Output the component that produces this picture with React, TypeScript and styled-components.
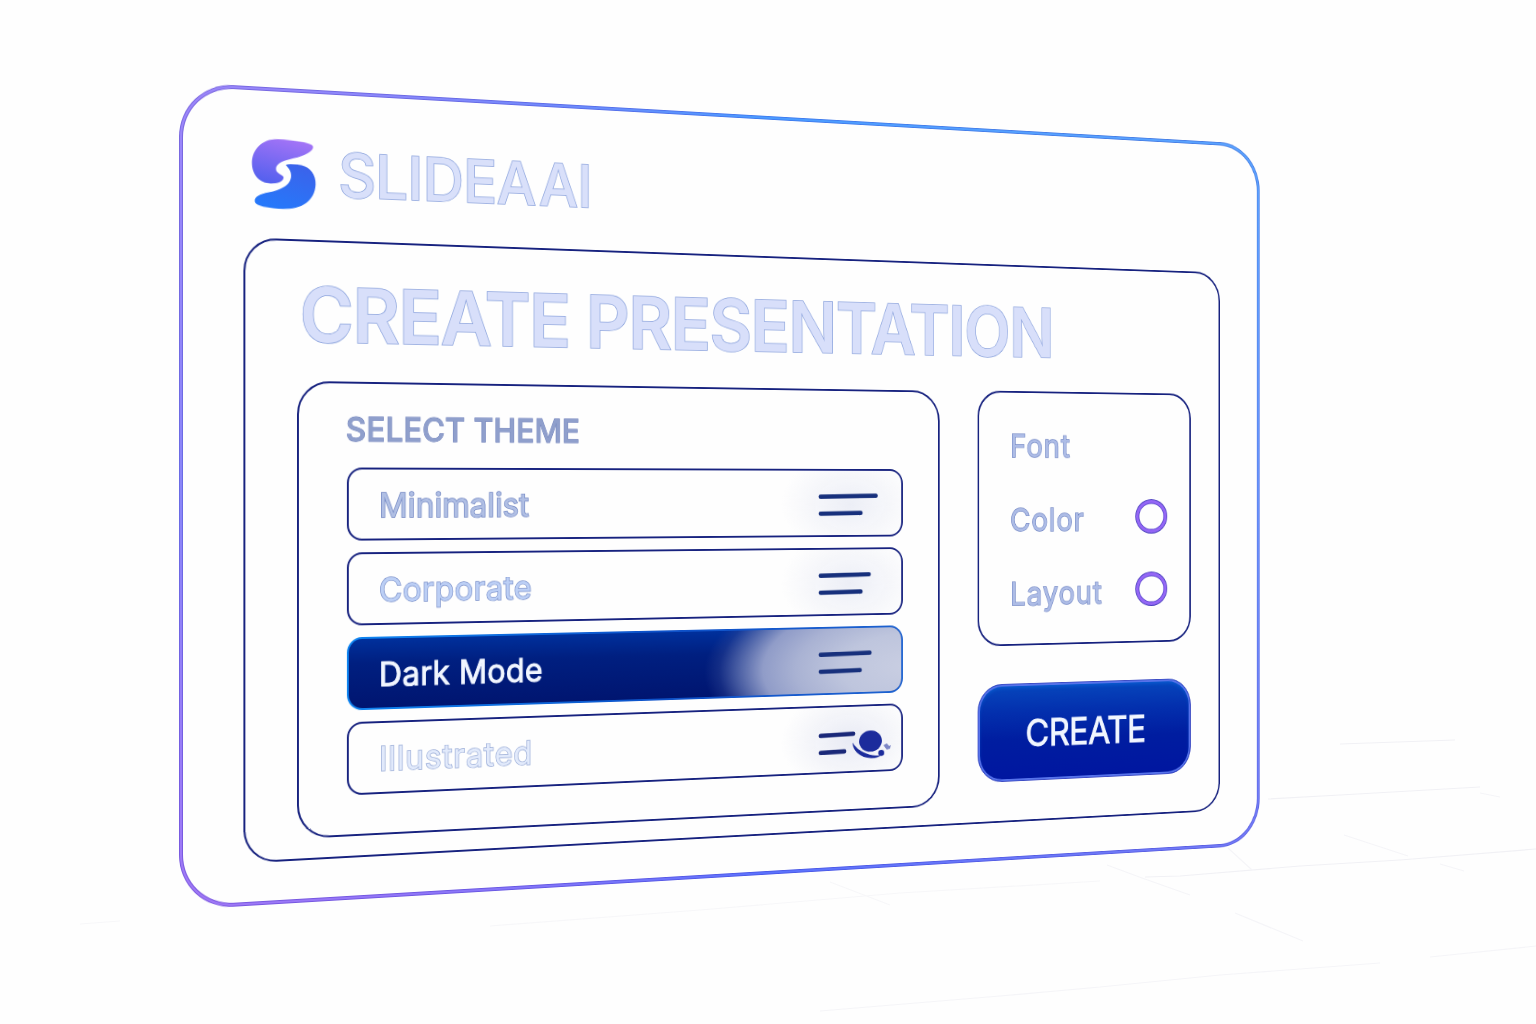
import React from "react";
import styled, { createGlobalStyle, css } from "styled-components";

const fontStack = `Inter, "Liberation Sans", sans-serif`;

const GlobalStyle = createGlobalStyle`
  * { box-sizing: border-box; }
  body { margin: 0; background: #fefefe; font-family: ${fontStack}; }
`;

const navy = "#17227f";

const edgeStops = (light: boolean) =>
  light
    ? "#4a9bff 0deg, #5aa3ff 57deg, #6594fb 90deg, #727af6 123deg, #5a72fd 180deg, #a078f6 237deg, #8a86f8 270deg, #9c86fa 303deg, #7189fb 328deg, #4a9bff 360deg"
    : "#3f7cf0 0deg, #4a80e4 57deg, #5f78e8 90deg, #5c60e2 123deg, #4a5ae8 180deg, #7c58e0 237deg, #6a6ce6 270deg, #7c68e0 303deg, #5f6ce8 328deg, #3f7cf0 360deg";

const Stage = styled.main`
  position: relative;
  width: 1536px;
  height: 1024px;
  overflow: hidden;
  padding: 72px 0 0 169px;
  background: #fefefe;
`;

const Floor = styled.svg`
  position: absolute;
  inset: 0;
`;

const Tilt = styled.div`
  position: relative;
  width: 1297px;
  padding: 10px;
  transform-origin: 10px 415.6px;
  transform: matrix3d(1, 0, 0, 0.00014231, 0, 1, 0, 0, 0, 0, 1, 0, 0, 0, 0, 1);
`;

const Frame = styled.section`
  height: 827.5px;
  padding: 1.8px;
  border: 1px solid transparent;
  border-radius: 55px;
  background:
    conic-gradient(${edgeStops(true)}) padding-box,
    conic-gradient(${edgeStops(false)}) border-box;
`;

const Surface = styled.div`
  display: flex;
  flex-direction: column;
  height: 100%;
  padding: 48px 51.4px 38.5px 61.5px;
  border: 1px solid transparent;
  border-radius: 52px;
  background:
    linear-gradient(#fefefe, #fefefe) padding-box,
    conic-gradient(${edgeStops(false)}) border-box;
`;

const Header = styled.header`
  display: flex;
  align-items: flex-start;
  gap: 23px;
  height: 101.2px;
  padding-left: 7.7px;
`;

const etched = (fill: string, stroke: string, width = 1.5) => css`
  color: ${fill};
  -webkit-text-stroke: ${width}px ${stroke};
  paint-order: stroke fill;
`;

const Brand = styled.div`
  margin-top: 3.7px;
  font-size: 61.5px;
  font-weight: 500;
  line-height: 1;
  letter-spacing: -0.6px;
  word-spacing: -12px;
  white-space: nowrap;
  ${etched("#d9e0fa", "#8aa2dc")}
`;

const outlined = css`
  border: 2px solid ${navy};
`;

const Workspace = styled.div`
  ${outlined}
  flex: 1;
  padding: 35.6px 37px 0 52.5px;
  border-radius: 34px;
`;

const Title = styled.h1`
  margin: 0 0 29.6px 3px;
  font-size: 76.5px;
  font-weight: 600;
  line-height: 1;
  letter-spacing: -1.2px;
  white-space: nowrap;
  ${etched("#d8dffa", "#8aa2dc")}
`;

const Columns = styled.div`
  display: flex;
  align-items: flex-start;
  gap: 47.4px;
`;

const ThemePanel = styled.section`
  ${outlined}
  width: 733.5px;
  height: 466.5px;
  padding: 31px 46px 0 50px;
  border-radius: 34px;
`;

const PanelLabel = styled.h2`
  margin: 0 0 21.8px -1px;
  font-size: 33.3px;
  font-weight: 500;
  line-height: 1;
  letter-spacing: 0.15px;
  white-space: nowrap;
  ${etched("#8f9fcc", "#6a7cb8", 0.9)}
`;

const ThemeList = styled.div`
  display: flex;
  flex-direction: column;
  gap: 11.6px;
`;

const ThemeRow = styled.button<{
  $active?: boolean;
  $fill: string;
  $stroke: string;
  $glow: string;
  $tracking: number;
}>`
  display: flex;
  align-items: center;
  justify-content: space-between;
  width: 635px;
  height: 75.4px;
  padding: 0 0 0 32px;
  border: 2px solid ${navy};
  border-radius: 16px;
  background: radial-gradient(ellipse 84px 56px at 568px 52%, ${(p) => p.$glow}, rgba(254, 254, 254, 0));
  font: 400 34px/1 ${fontStack};
  letter-spacing: ${(p) => p.$tracking}px;
  ${(p) => etched(p.$fill, p.$stroke, p.$active ? 0.9 : 1.4)}
  ${(p) =>
    p.$active &&
    css`
      border-color: transparent;
      background:
        radial-gradient(ellipse 246px 108px at 640px 62%, #c9cee2 0%, #bec5dd 34%, #a9b2d3 56%, #909cc8 72%, rgba(92, 111, 174, 0.8) 84%, rgba(50, 72, 150, 0.4) 93%, rgba(0, 28, 122, 0) 100%) padding-box,
        linear-gradient(#00309c, #001f80 35%, #001570) padding-box,
        linear-gradient(90deg, #0f86f2, #0d50c8 55%, #1d62d0) border-box;
    `}
`;

const RowName = styled.span`
  padding-top: 3px;
`;

const RowArt = styled.svg`
  display: block;
  width: 108px;
  height: 74px;
  margin-top: -1px;
`;

const SideColumn = styled.div`
  display: flex;
  flex-direction: column;
  gap: 43.2px;
  width: 281.8px;
  margin-top: -1px;
`;

const OptionsPanel = styled.section`
  ${outlined}
  height: 289.5px;
  padding: 18.6px 30px 0 39.8px;
  border-radius: 29px;
`;

const Option = styled.div`
  display: flex;
  align-items: center;
  justify-content: space-between;
  height: 83.8px;
  font-size: 36px;
  line-height: 1;
  letter-spacing: 1.1px;
  ${etched("#adbce6", "#7287c4", 1.3)}
`;

const Ring = styled.i`
  width: 43.5px;
  height: 40px;
  margin-top: -6px;
  border: 1px solid #4a3cc0;
  border-radius: 50%;
  box-shadow: inset 0 0 0 3.4px #9466f6, inset 0 0 0 4.4px #5a48cc;
`;

const CreateButton = styled.button`
  height: 111px;
  padding: 2px 0 0;
  border: 1px solid #3d4cc4;
  border-radius: 31px;
  background: linear-gradient(#0747bd, #0330ae 28%, #001da0 58%, #0016a0);
  box-shadow: inset 0 0 0 2px #5672ea, inset 0 3px 5px #0a63d6;
  font: 400 42.5px/1 ${fontStack};
  letter-spacing: -0.7px;
  ${etched("#f1f6ff", "#f1f6ff", 0.9)}
`;

const SlideaMark = () => (
  <svg width="67" height="71" viewBox="33 40 198 212" preserveAspectRatio="none">
    <defs>
      <linearGradient id="markTop" x1="0.6" y1="0" x2="0.3" y2="1">
        <stop offset="0" stopColor="#a173f6" />
        <stop offset="1" stopColor="#5360ee" />
      </linearGradient>
      <linearGradient id="markBottom" x1="0.8" y1="0" x2="0.4" y2="1">
        <stop offset="0" stopColor="#3c62ea" />
        <stop offset="1" stopColor="#2678fa" />
      </linearGradient>
    </defs>
    <path
      fill="url(#markTop)"
      d="M221 57C219 47 165 41 112 41C64 42 35 78 35 115C35 152 57 176 92 176C112 176 131 168 131 156C130 147 108 147 108 130C108 112 137 103 162 96C194 87 224 72 221 57Z"
    />
    <path
      fill="url(#markBottom)"
      d="M138 118C146 113 170 114 186 116C213 121 230 145 229 173C227 224 184 251 130 251C92 251 50 248 44 233C40 219 60 208 86 203C120 195 154 178 154 150C154 134 145 127 138 118Z"
    />
  </svg>
);

const Lines = ({ top, bottom, y = 0, color = "#17307c" }: { top: number; bottom: number; y?: number; color?: string }) => (
  <g stroke={color} strokeWidth="4.8" strokeLinecap="round">
    <path d={`M9 ${30.6 + y}L${top} ${29.6 + y}`} />
    <path d={`M9 ${49.3 + y}L${bottom} ${48.7 + y}`} />
  </g>
);

const Splash = () => (
  <g fill="#1c2c9c">
    <ellipse cx="70" cy="40.8" rx="14" ry="11.8" />
    <path d="M48 41.5C48 49 55 58.5 71 59.8C76 60 80 59 82.5 57.5C72 57.5 56 54 48 41.5Z" />
    <ellipse cx="83.2" cy="54.4" rx="3.7" ry="3.3" />
    <path opacity=".55" d="M86 46L90 44L93 47L95 46L94 50L90 51Z" />
  </g>
);

const themes = [
  {
    name: "Minimalist",
    fill: "#b0bfe4",
    stroke: "#7186c2",
    glow: "#eceef6",
    tracking: 0.1,
    art: <Lines top={76.5} bottom={58} />,
  },
  {
    name: "Corporate",
    fill: "#bccff5",
    stroke: "#7a90ca",
    glow: "#eceef6",
    tracking: 0.4,
    art: <Lines top={68} bottom={58} />,
  },
  {
    name: "Dark Mode",
    fill: "#f1f6ff",
    stroke: "#f1f6ff",
    glow: "#c9cee2",
    tracking: 0.1,
    active: true,
    art: <Lines top={69} bottom={57} />,
  },
  {
    name: "Illustrated",
    fill: "#e2eafb",
    stroke: "#97aad6",
    glow: "#e8eaf4",
    tracking: 0.8,
    art: (
      <>
        <Lines top={49} bottom={38} y={2.3} color="#1a2878" />
        <Splash />
      </>
    ),
  },
];

const options = [
  { name: "Font", ring: false },
  { name: "Color", ring: true },
  { name: "Layout", ring: true },
];

export default function App() {
  return (
    <>
      <GlobalStyle />
      <Stage>
        <Floor width="1536" height="1024" fill="none" stroke="#f1f1f5" strokeWidth="1.2">
          <path d="M1268 799L1340 795L1480 787M1340 744L1455 740" />
          <path d="M1145 877L1180 876L1300 866L1400 860L1536 849" />
          <path stroke="#f5f5f8" d="M1100 987L1220 975L1380 963M1430 957L1536 946M820 1011L1000 996L1100 987" />
          <path stroke="#f5f5f8" d="M1228 848L1252 870M1107 865L1142 878L1190 895M1235 913L1303 941M1344 835L1408 856M1440 864L1464 871M1480 793L1500 797" />
          <path stroke="#f7f7f9" d="M490 926L700 910L900 893L1100 881M830 882L890 905M80 924L120 921" />
        </Floor>
        <Tilt>
          <Frame>
            <Surface>
              <Header>
                <SlideaMark />
                <Brand>SLIDEA AI</Brand>
              </Header>
              <Workspace>
                <Title>CREATE PRESENTATION</Title>
                <Columns>
                  <ThemePanel>
                    <PanelLabel>SELECT THEME</PanelLabel>
                    <ThemeList>
                      {themes.map((t) => (
                        <ThemeRow
                          key={t.name}
                          $active={t.active}
                          $fill={t.fill}
                          $stroke={t.stroke}
                          $glow={t.glow}
                          $tracking={t.tracking}
                        >
                          <RowName>{t.name}</RowName>
                          <RowArt viewBox="0 0 108 74">{t.art}</RowArt>
                        </ThemeRow>
                      ))}
                    </ThemeList>
                  </ThemePanel>
                  <SideColumn>
                    <OptionsPanel>
                      {options.map((o) => (
                        <Option key={o.name}>
                          <span>{o.name}</span>
                          {o.ring && <Ring />}
                        </Option>
                      ))}
                    </OptionsPanel>
                    <CreateButton>CREATE</CreateButton>
                  </SideColumn>
                </Columns>
              </Workspace>
            </Surface>
          </Frame>
        </Tilt>
      </Stage>
    </>
  );
}
